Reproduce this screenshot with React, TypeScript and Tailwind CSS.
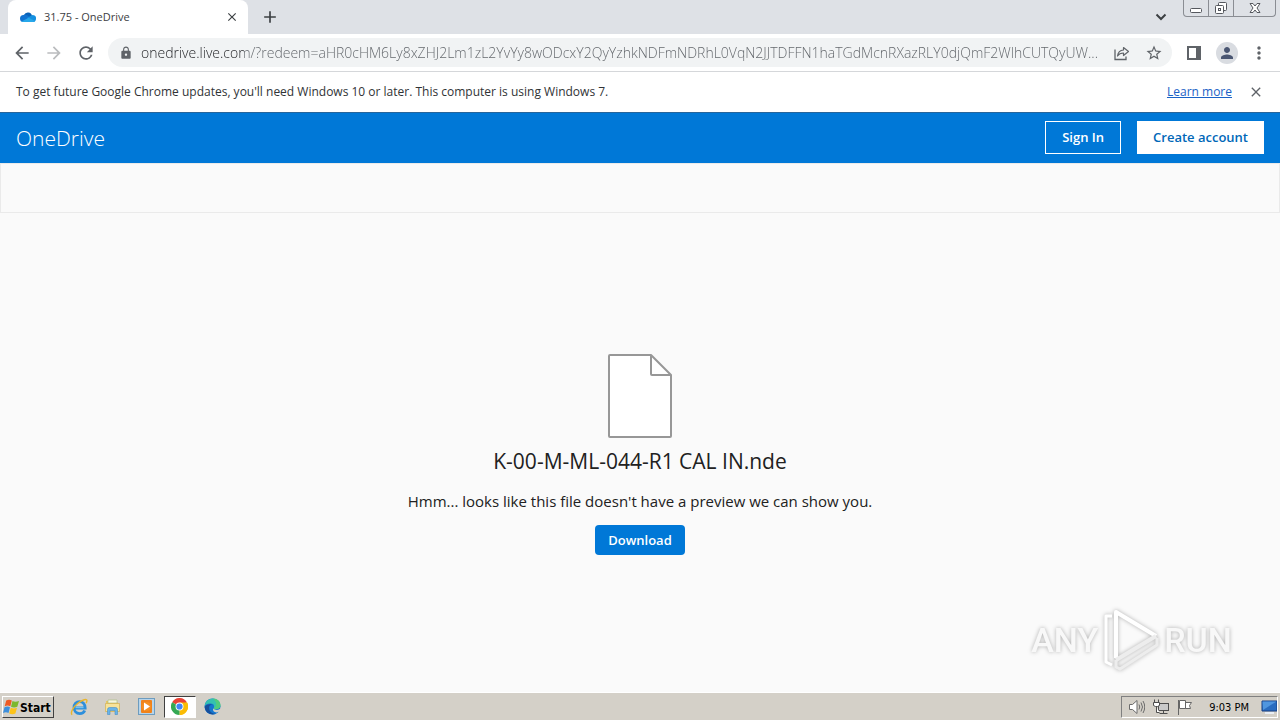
import { useState } from "react";
import type { ReactNode } from "react";
import { MdArrowBack, MdArrowForward, MdRefresh, MdLock, MdStarBorder, MdPerson, MdMoreVert, MdClose, MdAdd } from "react-icons/md";

const PAGE_URL =
  "onedrive.live.com/?redeem=aHR0cHM6Ly8xZHJ2Lm1zL2YvYy8wODcxY2QyYzhkNDFmNDRhL0VqN2JJTDFFN1haTGdMcnRXazRLY0djQmF2WlhCUTQyUW...";

const CloudIcon = () => (
  <svg width="16" height="16" viewBox="0 0 16 16">
    <path d="M4 6a4.200 4.200 0 0 1 8 1l-4 3-5-3z" fill="#0a63b8" />
    <path d="M3.500 6c2-.5 3.500.2 5 1.200L12 9l-6 4H3.500A3.500 3.500 0 0 1 3.500 6z" fill="#1173d1" />
    <path d="M11 6.700a3.200 3.200 0 0 1 5 3.200c0 2-1.500 3.100-3 3.100L7 9z" fill="#1590e0" />
    <path d="M1.500 12.400 8.600 8.800l6.500 3.300c-.6.600-1.300.9-2.300.9H3.500c-.8 0-1.500-.2-2-.6z" fill="#27a8ea" />
  </svg>
);

const ShareIcon = () => (
  <svg width="16" height="16" viewBox="0 0 16 16" fill="none" stroke="#5f6368">
    <path d="M1 4.500v10h11v-3" strokeWidth="1.300" />
    <path d="M9.500 2.500 14.500 6.500 9.500 10.500V8C6.500 8 4.800 9 3.500 11 4 7.500 6 5.300 9.500 5z" strokeWidth="1.200" strokeLinejoin="round" />
  </svg>
);

const FileIcon = () => (
  <svg width="66" height="86" viewBox="0 0 66 86" stroke="#979797" strokeWidth="2" strokeLinejoin="round">
    <path d="M3 2h41l20 20v61a1 1 0 0 1-1 1H3a1 1 0 0 1-1-1V3a1 1 0 0 1 1-1z" fill="#fff" />
    <path d="M44 2v19a1 1 0 0 0 1 1h19" fill="none" />
  </svg>
);

const WindowsLogo = () => (
  <svg width="17" height="16" viewBox="0 0 17 16">
    <path d="M3.200 1.500C5.500.2 7 .5 8.800 1.500L7.300 7.300C5.500 6.300 3.800 6.200 1.700 7.300z" fill="#ee5a24" />
    <path d="M9.500 1.900c1.800 1 4 1 6.500 0l-1.700 5.800c-2.200 1.100-4.200 1.100-6.300 0z" fill="#7cb82f" />
    <path d="M1.500 8.200c2.200-1.100 3.800-1 5.500 0l-1.500 5.700c-1.700-1-3.400-1-5.500 0z" fill="#3d8fdc" />
    <path d="M7.800 8.700c1.900 1 4 1 6.200 0l-1.600 5.800c-2.200 1-4.100.9-6.200-.1z" fill="#fcc319" />
  </svg>
);

const IeIcon = () => (
  <svg width="18" height="18" viewBox="0 0 17 17" fill="none">
    <path d="M4 9.400h10.300c0-3.600-2.100-6-5.200-6S3.800 5.900 3.800 9s2.200 5.700 5.400 5.700c2.300 0 4-1.200 4.700-2.900" stroke="#2d8fdc" strokeWidth="2.700" />
    <path d="M5.200 9.100h7.600" stroke="#7ccbf5" strokeWidth="1" />
    <path d="M2 15.800c-2-2 1-7.300 5.500-10.800S16 .5 16 2.300c0 .8-.3 1.700-.8 2.500" stroke="#e9b52c" strokeWidth="1.300" />
  </svg>
);

const FolderIcon = () => (
  <svg width="17" height="17" viewBox="0 0 17 17">
    <path d="M2 3h5l1 1.500h6V14H2z" fill="#e9c864" />
    <path d="M4 2h9v3H4z" fill="#f8f5de" stroke="#a6bd79" strokeWidth=".6" />
    <path d="M1.500 5.500h14v8h-14z" fill="#f7e39a" stroke="#d3b055" strokeWidth=".7" />
    <path d="M3.500 16.500v-5q0-2 2-2h6q2 0 2 2v5h-2.500v-4H6v4z" fill="#69b4e8" stroke="#4a8fc6" strokeWidth=".6" />
  </svg>
);

const PlayerIcon = () => (
  <svg width="17" height="17" viewBox="0 0 17 17">
    <rect x=".5" y=".5" width="16" height="16" fill="#b7d4ea" stroke="#6d9cbf" />
    <rect x="3" y="2" width="11" height="13" rx="1" fill="#f0821a" />
    <circle cx="8.500" cy="8.500" r="4.600" fill="#f48f22" />
    <path d="M6 4.500v8l6-4z" fill="#fff" />
  </svg>
);

const ChromeIcon = () => (
  <svg width="17" height="17" viewBox="0 0 24 24">
    <path d="M12 12 1.600 6A12 12 0 0 1 22.400 6z" fill="#ea4335" />
    <path d="M12 12 22.400 6A12 12 0 0 1 12 24z" fill="#fbbc04" />
    <path d="M12 12v12A12 12 0 0 1 1.600 6z" fill="#34a853" />
    <path d="M12 6.500h10.700A12 12 0 0 1 12 24l4.800-9.200z" fill="#fbbc04" />
    <circle cx="12" cy="12" r="5.600" fill="#fff" />
    <circle cx="12" cy="12" r="4.400" fill="#4285f4" />
  </svg>
);

const EdgeIcon = () => (
  <svg width="17" height="17" viewBox="0 0 17 17">
    <circle cx="8.500" cy="8.500" r="8" fill="#1577cf" />
    <path d="M.6 8C1.200 3.500 4.500.5 8.800.5c4.600 0 7.700 3.300 7.700 6.700 0 2.600-2 4-4.500 4-1.800 0-2.600-.6-2.200-1.300.8-1.500.3-4.200-3-4.400C3.700 5.300 1.500 6.500.6 8z" fill="#35c1b0" />
    <path d="M9 .5c4.500 0 7.500 3.300 7.500 6.700 0 2.600-2 4-4.500 4-1.500 0-2.500-.5-2.200-1.200C14 8 12 3 9 .5z" fill="#62d35b" opacity=".6" />
    <path d="M5.500 8C4 12 7 16 11.500 15.900 8.500 17.300 1.500 16 .6 9 1.500 6.500 6.800 5 8.500 7.300 6.800 6.800 6 7.200 5.500 8z" fill="#174f9b" />
    <path d="M9.600 10.300c.2 1.800 4 2.200 6.200.8l.9 1.200c-1.500 2-4 2.600-6 1.800-1.900-.7-2-2.700-1.100-3.800z" fill="#d4d0c8" />
  </svg>
);

type IconButtonProps = { label: string; className?: string; children: ReactNode };

const IconButton = ({ label, className = "", children }: IconButtonProps) => (
  <button aria-label={label} className={`flex shrink-0 items-center justify-center ${className}`}>
    {children}
  </button>
);

const Watermark = () => (
  <div className="absolute right-12 bottom-5 flex items-center gap-1 font-['Roboto',sans-serif] text-[34px] leading-[64px] font-medium text-[#f8f8f8] drop-shadow-[0_0_2px_rgba(0,0,0,0.3)]">
    <span>ANY</span>
    <svg width="58" height="64" viewBox="0 0 58 64" fill="none" strokeLinejoin="round">
      <path d="M10 8H4v46l6 3" stroke="#fff" strokeWidth="3" />
      <path d="M14 52v7l4 2 37-24v-7" stroke="#ededed" strokeWidth="3" />
      <path d="M14 50V4l40 24" stroke="#fff" strokeWidth="4" />
      <path d="M54 28 14 52" stroke="#ededed" strokeWidth="4" />
    </svg>
    <span>RUN</span>
  </div>
);

const TabStrip = () => (
  <div className="flex h-[34px] items-start bg-[#dee1e6]">
    <div className="flex h-full w-60 items-center gap-2 rounded-t-lg bg-white ml-2 pl-3 pr-2">
      <CloudIcon />
      <span className="flex-1 text-[11px] text-[#3c4043]">31.75 - OneDrive</span>
      <IconButton label="Close tab" className="size-4 text-[#3c4043]">
        <MdClose size={14} />
      </IconButton>
    </div>
    <IconButton label="New tab" className="h-full w-11 text-[#3c4043]">
      <MdAdd size={20} />
    </IconButton>
    <div className="flex-1" />
    <IconButton label="Search tabs" className="h-full w-11 text-[#3c4043]">
      <svg width="12" height="8" viewBox="0 0 12 8" fill="none" stroke="currentColor" strokeWidth="2">
        <path d="m1.500 1.500 4.500 4.500 4.500-4.500" />
      </svg>
    </IconButton>
    <div className="mr-1 flex h-[17px] divide-x divide-[#8a8d93] rounded-b border border-t-0 border-[#8a8d93]">
      <IconButton label="Minimize" className="w-[25px]">
        <svg width="12" height="12" viewBox="0 0 12 12" fill="#fff" stroke="#55585e">
          <rect x=".5" y="6.500" width="11" height="4" rx="1" />
        </svg>
      </IconButton>
      <IconButton label="Restore" className="w-[25px]">
        <svg width="14" height="14" viewBox="0 0 14 14" fill="#fff" stroke="#55585e">
          <rect x="4.500" y="1.500" width="8" height="8" rx="1" />
          <rect x="1.500" y="4.500" width="8" height="8" rx="1" />
          <rect x="4.500" y="7.500" width="2" height="2" />
        </svg>
      </IconButton>
      <IconButton label="Close window" className="w-[41px]">
        <svg width="12" height="12" viewBox="0 0 12 12" fill="#fff" stroke="#55585e">
          <path d="M1 1.500h3l2 2.500 2-2.500h3L8 6l3 4.500H8L6 8l-2 2.500H1L4 6z" />
        </svg>
      </IconButton>
    </div>
  </div>
);

const AddressBar = () => {
  const [url, setUrl] = useState(PAGE_URL);

  return (
    <div className="flex h-[38px] items-center border-b border-[#d5d7da] bg-white px-2">
      <IconButton label="Back" className="w-7 text-[#5f6368]"><MdArrowBack size={20} /></IconButton>
      <IconButton label="Forward" className="ml-1 w-7 text-[#babcbe]"><MdArrowForward size={20} /></IconButton>
      <IconButton label="Reload" className="ml-1 w-7 text-[#5f6368]"><MdRefresh size={20} /></IconButton>
      <div className="ml-2 flex h-[29px] flex-1 items-center rounded-full bg-[#f1f3f4] pl-[11px] pr-1.5">
        <MdLock size={14} className="shrink-0 text-[#5f6368]" />
        <input
          aria-label="Address"
          className="ml-2 min-w-0 flex-1 bg-[linear-gradient(to_right,#202124_103px,#5f6368_103px)] bg-clip-text text-sm font-light text-transparent outline-none"
          value={url}
          onChange={(e) => setUrl(e.target.value)}
        />
        <IconButton label="Share" className="ml-2 w-6"><ShareIcon /></IconButton>
        <IconButton label="Bookmark" className="ml-2 w-6 text-[#5f6368]"><MdStarBorder size={18} /></IconButton>
      </div>
      <IconButton label="Side panel" className="ml-2 w-7">
        <svg width="14" height="14" viewBox="0 0 14 14">
          <rect x="1" y="1" width="12" height="12" fill="none" stroke="#5f6368" strokeWidth="2" />
          <path d="M9 1h4v12H9z" fill="#5f6368" />
        </svg>
      </IconButton>
      <IconButton label="Profile" className="ml-2 size-[22px] rounded-full bg-[#d9dce1] text-[#4a5672]"><MdPerson size={18} /></IconButton>
      <IconButton label="Menu" className="ml-2 w-[26px] text-[#5f6368]"><MdMoreVert size={20} /></IconButton>
    </div>
  );
};

const InfoBar = () => (
  <div className="flex h-10 items-center bg-white px-4 text-xs text-[#303336]">
    <p className="flex-1">
      To get future Google Chrome updates, you'll need Windows 10 or later. This computer is using Windows 7.
    </p>
    <a href="#" className="text-[#1a62c6] underline">Learn more</a>
    <IconButton label="Dismiss" className="ml-4 size-4 text-[#5f6368]"><MdClose size={18} /></IconButton>
  </div>
);

const Header = () => (
  <header className="flex h-[51px] items-center border-t border-[#27659b] bg-[#0078d7] px-4 pb-0.5">
    <h1 className="flex-1 pt-1 text-[21px] font-light text-white">OneDrive</h1>
    <button className="h-[33px] border border-white px-4 pt-0.5 text-[13px] font-semibold text-white">Sign In</button>
    <button className="ml-4 h-[33px] bg-white px-4 pt-0.5 text-[13px] font-semibold text-[#0067b8]">Create account</button>
  </header>
);

const Taskbar = () => (
  <footer className="flex h-7 items-center border-t border-white bg-[#d4d0c8] px-0.5 font-['DejaVu_Sans_Condensed',sans-serif] text-[11px] leading-4 text-black">
    <button className="flex h-[22px] items-center border border-t-white border-l-white border-r-[#404040] border-b-[#404040] pr-0.5 text-xs font-bold">
      <WindowsLogo />
      <span className="pt-0.5">Start</span>
    </button>
    <div className="ml-2 flex h-full items-center">
      <IconButton label="Internet Explorer" className="w-[34px]"><IeIcon /></IconButton>
      <IconButton label="Windows Explorer" className="w-[34px]"><FolderIcon /></IconButton>
      <IconButton label="Media Player" className="w-[34px]"><PlayerIcon /></IconButton>
      <IconButton label="Google Chrome" className="h-[22px] w-8 border border-t-[#404040] border-l-[#404040] border-r-white border-b-white bg-white"><ChromeIcon /></IconButton>
      <IconButton label="Microsoft Edge" className="w-[34px]"><EdgeIcon /></IconButton>
    </div>
    <div className="flex-1" />
    <div className="flex h-[22px] items-center gap-2 border border-t-[#808080] border-l-[#808080] border-r-white border-b-white pl-1.5">
      <svg width="17" height="16" viewBox="0 0 17 16" fill="none" stroke="#6b6b6b">
        <path d="M1.500 5.500h3L9 1.500v13l-4.500-4h-3z" fill="#fff" />
        <path d="M11 5.500q1.500 2.500 0 5M13 3.500q3 4.500 0 9M15 2q3.500 6 0 12" />
      </svg>
      <svg width="16" height="16" viewBox="0 0 16 16" fill="#fff" stroke="#4d4d4d">
        <rect x="5.500" y="4.500" width="10" height="7" fill="#c9c9c9" />
        <path d="M10.500 11.500v3M6.500 14.500h8M1.500.5v3M5.500.5v3M.5 3.500h6v3l-2 1h-2l-2-1zM3.500 7.500v6h3" />
      </svg>
      <svg width="16" height="16" viewBox="0 0 16 16" fill="#fff" stroke="#666">
        <path d="M1.500 1v15M2.500 1.500h6v8h-6zM8.500 3.500h6l-2 3 1 3h-5z" />
      </svg>
      <time className="ml-2 mr-1 pt-0.5">9:03 PM</time>
      <IconButton label="Show desktop">
        <svg width="16" height="16" viewBox="0 0 16 16">
          <path d="M1 2h15v10H1z" fill="#2a6cc0" stroke="#173f83" />
          <path d="M1.500 2.500h14L2 11z" fill="#5096df" />
          <path d="M4 13h9v2H4z" fill="#e9eef4" />
        </svg>
      </IconButton>
    </div>
  </footer>
);

export default function App() {
  return (
    <div className="flex min-h-screen flex-col bg-[#fafafa] font-['Open_Sans',sans-serif]">
      <TabStrip />
      <AddressBar />
      <InfoBar />
      <Header />
      <div className="h-[50px] border border-[#eaeaea]" />
      <main className="relative flex flex-1 flex-col items-center justify-center pt-0.5 text-[#212121]">
        <FileIcon />
        <h2 className="mt-1 text-[21px] leading-9">K-00-M-ML-044-R1 CAL IN.nde</h2>
        <p className="mt-2.5 text-[15px] leading-6">Hmm... looks like this file doesn't have a preview we can show you.</p>
        <button className="mt-3 h-[30px] rounded bg-[#0078d7] px-[13px] pt-0.5 text-[13px] font-semibold text-white">Download</button>
        <Watermark />
      </main>
      <Taskbar />
    </div>
  );
}
